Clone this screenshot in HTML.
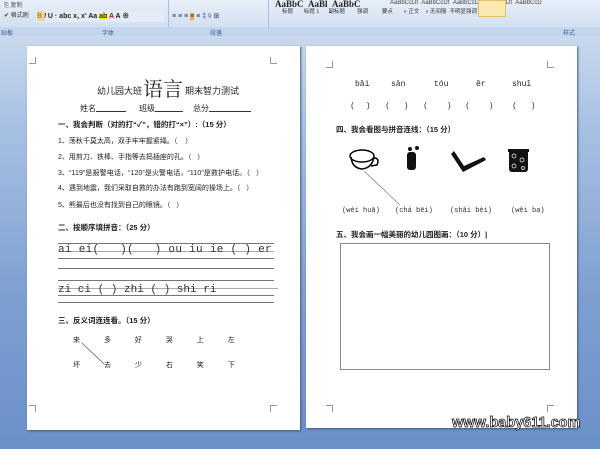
<!DOCTYPE html><html><head><meta charset="utf-8"><style>
*{margin:0;padding:0;box-sizing:border-box}
body{width:600px;height:449px;overflow:hidden;position:relative;font-family:"Liberation Sans","Noto Sans CJK SC",sans-serif;background:linear-gradient(180deg,#c9d9ee 36px,#a9c2e3 120px,#7d9fd0 300px,#6a90c9 449px)}
.rib{position:absolute;left:0;top:0;width:600px;height:27px;background:linear-gradient(#e8eff9,#d3e0f1)}
.lab{position:absolute;left:0;top:27px;width:600px;height:9px;background:#c4d6ee;font-size:6px;color:#3a5b8c}
.pg{position:absolute;background:#fff;box-shadow:1px 1px 2px #405a80}
.a{position:absolute;white-space:nowrap;font-size:7px;color:#222;line-height:1}
.b{font-weight:bold;font-size:7.5px}
.ln{position:absolute;height:1px;background:#777}
.c{position:absolute;width:7px;height:7px;border-color:#999;border-style:solid;border-width:0}
.u{display:inline-block;border-bottom:1px solid #333;height:8px;vertical-align:-1px}
.m{font-family:'Liberation Mono',monospace}
</style></head><body>
<div class="rib"></div>
<div class="a" style="left:4px;top:3px;font-size:6px;color:#555">⎘ 复制</div>
<div class="a" style="left:4px;top:13px;font-size:6px;color:#333">✔ 格式刷</div>
<div style="position:absolute;left:36px;top:11px;width:128px;height:11px;background:#e4ecf6"></div>
<div class="a" style="left:37px;top:13px;font-size:7px;color:#222;font-weight:bold">B <i>I</i> U · abc x, x' Aa <span style="background:#ff0">ab</span> <span style="color:#c00">A</span> A ⊕</div>
<div style="position:absolute;left:37px;top:11px;width:8px;height:10px;background:#f7c45a;opacity:.6"></div>
<div class="a" style="left:172px;top:13px;font-size:7px;color:#335">≡ ≡ ≡ <span style="background:#f0b040">≡</span> ≡ ‡ ◊ ⊞</div>
<div style="position:absolute;left:168px;top:0;width:1px;height:35px;background:#a9bedb"></div>
<div style="position:absolute;left:268px;top:0;width:1px;height:35px;background:#a9bedb"></div>
<div class="a" style="left:275px;top:0px;font-size:9px;color:#222;font-family:'Liberation Serif',serif;font-weight:bold">AaBbC &nbsp;AaBl &nbsp;AaBbC</div>
<div class="a" style="left:390px;top:0px;font-size:6px;color:#444">AaBbCcDt &nbsp;AaBbCcDt &nbsp;AaBbCcDt &nbsp;AaBbCcDt &nbsp;AaBbCcD</div>
<div style="position:absolute;left:478px;top:0;width:28px;height:17px;border:1px solid #e5c060;background:#fbe9b4"></div>
<div class="a" style="left:282px;top:10px;font-size:5.5px;color:#333">标题 &nbsp;&nbsp;&nbsp;&nbsp;&nbsp;&nbsp;标题 1 &nbsp;&nbsp;&nbsp;&nbsp;&nbsp;副标题 &nbsp;&nbsp;&nbsp;&nbsp;&nbsp;&nbsp;&nbsp;强调 &nbsp;&nbsp;&nbsp;&nbsp;&nbsp;&nbsp;&nbsp;&nbsp;要点 &nbsp;&nbsp;&nbsp;&nbsp;&nbsp;&nbsp;» 正文 &nbsp;&nbsp;&nbsp;» 无间隔 &nbsp;不明显强调</div>
<div class="lab"><span style="position:absolute;left:1px;top:1px">贴板</span><span style="position:absolute;left:102px;top:1px">字体</span><span style="position:absolute;left:210px;top:1px">段落</span><span style="position:absolute;left:563px;top:1px">样式</span></div>

<div class="pg" style="left:27px;top:46px;width:273px;height:384px"></div>
<div class="pg" style="left:306px;top:46px;width:271px;height:382px"></div>
<div class="c" style="left:29px;top:57px;border-right-width:1px;border-bottom-width:1px"></div>
<div class="c" style="left:270px;top:57px;border-left-width:1px;border-bottom-width:1px"></div>
<div class="c" style="left:29px;top:405px;border-right-width:1px;border-top-width:1px"></div>
<div class="c" style="left:270px;top:405px;border-left-width:1px;border-top-width:1px"></div>
<div class="c" style="left:326px;top:61px;border-right-width:1px;border-bottom-width:1px"></div>
<div class="c" style="left:547px;top:61px;border-left-width:1px;border-bottom-width:1px"></div>
<div class="c" style="left:326px;top:405px;border-right-width:1px;border-top-width:1px"></div>
<div class="c" style="left:547px;top:405px;border-left-width:1px;border-top-width:1px"></div>

<div class="a" style="left:97px;top:87px;font-size:9px">幼儿园大班</div>
<div class="a" style="left:143px;top:78px;font-size:20px;font-family:'Noto Serif CJK SC',serif">语言</div>
<div class="a" style="left:185px;top:87px;font-size:9px">期末智力测试</div>
<div class="a" style="left:80px;top:104px;font-size:8px">姓名<span class="u" style="width:30px"></span></div>
<div class="a" style="left:139px;top:104px;font-size:8px">班级<span class="u" style="width:28px"></span></div>
<div class="a" style="left:193px;top:104px;font-size:8px">总分<span class="u" style="width:42px"></span></div>
<div class="a b" style="left:58px;top:121px">一、我会判断（对的打“✓”，错的打“×”）:（15 分）</div>
<div class="a" style="left:58px;top:138px">1、荡秋千莫太高，双手牢牢握紧绳。（&nbsp;&nbsp;&nbsp;&nbsp;）</div>
<div class="a" style="left:58px;top:154px">2、用剪刀、铁棒、手指等去捣插座的孔。（&nbsp;&nbsp;&nbsp;）</div>
<div class="a" style="left:58px;top:170px;letter-spacing:.1px">3、“119”是报警电话，“120”是火警电话，“110”是救护电话。（&nbsp;&nbsp;&nbsp;）</div>
<div class="a" style="left:58px;top:185px">4、遇到地震，我们采取自救的办法有跑到宽阔的操场上。（&nbsp;&nbsp;&nbsp;）</div>
<div class="a" style="left:58px;top:202px">5、熊最后也没有找到自己的眼镜。（&nbsp;&nbsp;&nbsp;）</div>
<div class="a b" style="left:58px;top:224px">二、按顺序填拼音：（25 分）</div>
<div class="ln" style="left:58px;top:243px;width:216px"></div>
<div class="ln" style="left:58px;top:251px;width:216px;background:#aaa"></div>
<div class="ln" style="left:58px;top:258px;width:216px"></div>
<div class="ln" style="left:58px;top:268px;width:216px"></div>
<div class="ln" style="left:58px;top:280px;width:216px"></div>
<div class="ln" style="left:58px;top:288px;width:220px;background:#aaa"></div>
<div class="ln" style="left:58px;top:295px;width:216px"></div>
<div class="ln" style="left:58px;top:302px;width:216px"></div>
<div class="a m" style="left:58px;top:245px;font-size:11px;color:#333;letter-spacing:.3px">ai ei(&nbsp;&nbsp;&nbsp;)(&nbsp;&nbsp;&nbsp;) ou iu ie ( ) er</div>
<div class="a m" style="left:58px;top:285px;font-size:11px;color:#333">zi ci ( ) zhi ( ) shi ri</div>
<div class="a b" style="left:58px;top:317px">三、反义词连连看。（15 分）</div>
<div class="a" style="left:73px;top:337px;word-spacing:22px">来 多 好 哭 上 左</div>
<div class="a" style="left:73px;top:362px;word-spacing:22px">坏 去 少 右 笑 下</div>
<svg style="position:absolute;left:0;top:0" width="600" height="449"><line x1="82" y1="343" x2="104" y2="364" stroke="#555" stroke-width=".7"/><line x1="364" y1="171" x2="400" y2="205" stroke="#777" stroke-width=".7"/>
<g fill="none" stroke="#000"><ellipse cx="362" cy="156" rx="12" ry="6" stroke-width="1.5"/><path d="M351 157 Q352 168 362 169 Q372 168 374 157" stroke-width="1.5"/><path d="M374 158 Q380 158 377 165 L371 166" stroke-width="1.5"/></g>
<g fill="#111"><rect x="407" y="152" width="9" height="18" rx="3"/><circle cx="410" cy="149" r="2"/><circle cx="417" cy="148" r="2"/><path d="M454 151 L464 166 L484 157 L486 160 L463 172 L451 154Z"/><rect x="509" y="150" width="19" height="22" rx="3"/><rect x="508" y="149" width="21" height="3"/></g>
<g fill="none" stroke="#fff" stroke-width=".7"><circle cx="514" cy="156" r="2"/><circle cx="522" cy="160" r="2"/><circle cx="514" cy="166" r="2"/><circle cx="523" cy="168" r="1.5"/></g></svg>

<div class="a m" style="left:355px;top:81px;font-size:8px">bǎi</div>
<div class="a m" style="left:391px;top:81px;font-size:8px">sān</div>
<div class="a m" style="left:434px;top:81px;font-size:8px">tóu</div>
<div class="a m" style="left:476px;top:81px;font-size:8px">ěr</div>
<div class="a m" style="left:512px;top:81px;font-size:8px">shuǐ</div>
<div class="a" style="left:351px;top:102px;font-size:8px">(</div><div class="a" style="left:367px;top:102px;font-size:8px">)</div>
<div class="a" style="left:386px;top:102px;font-size:8px">(</div><div class="a" style="left:405px;top:102px;font-size:8px">)</div>
<div class="a" style="left:424px;top:102px;font-size:8px">(</div><div class="a" style="left:448px;top:102px;font-size:8px">)</div>
<div class="a" style="left:466px;top:102px;font-size:8px">(</div><div class="a" style="left:490px;top:102px;font-size:8px">)</div>
<div class="a" style="left:513px;top:102px;font-size:8px">(</div><div class="a" style="left:532px;top:102px;font-size:8px">)</div>
<div class="a b" style="left:336px;top:126px">四、我会看图与拼音连线：（15 分）</div>
<div class="a m" style="left:342px;top:208px;color:#333">(wéi huā)</div>
<div class="a m" style="left:395px;top:208px;color:#333">(chá bēi)</div>
<div class="a m" style="left:450px;top:208px;color:#333">(shǎi bèi)</div>
<div class="a m" style="left:511px;top:208px;color:#333">(wěi ba)</div>
<div class="a b" style="left:336px;top:231px">五、我会画一幅美丽的幼儿园图画：（10 分）|</div>
<div style="position:absolute;left:340px;top:243px;width:210px;height:127px;border:1px solid #888"></div>
<div class="a" style="left:452px;top:416px;font-size:14.5px;font-weight:bold;color:#fff;-webkit-text-stroke:0.7px #000">www.baby611.com</div>
</body></html>
